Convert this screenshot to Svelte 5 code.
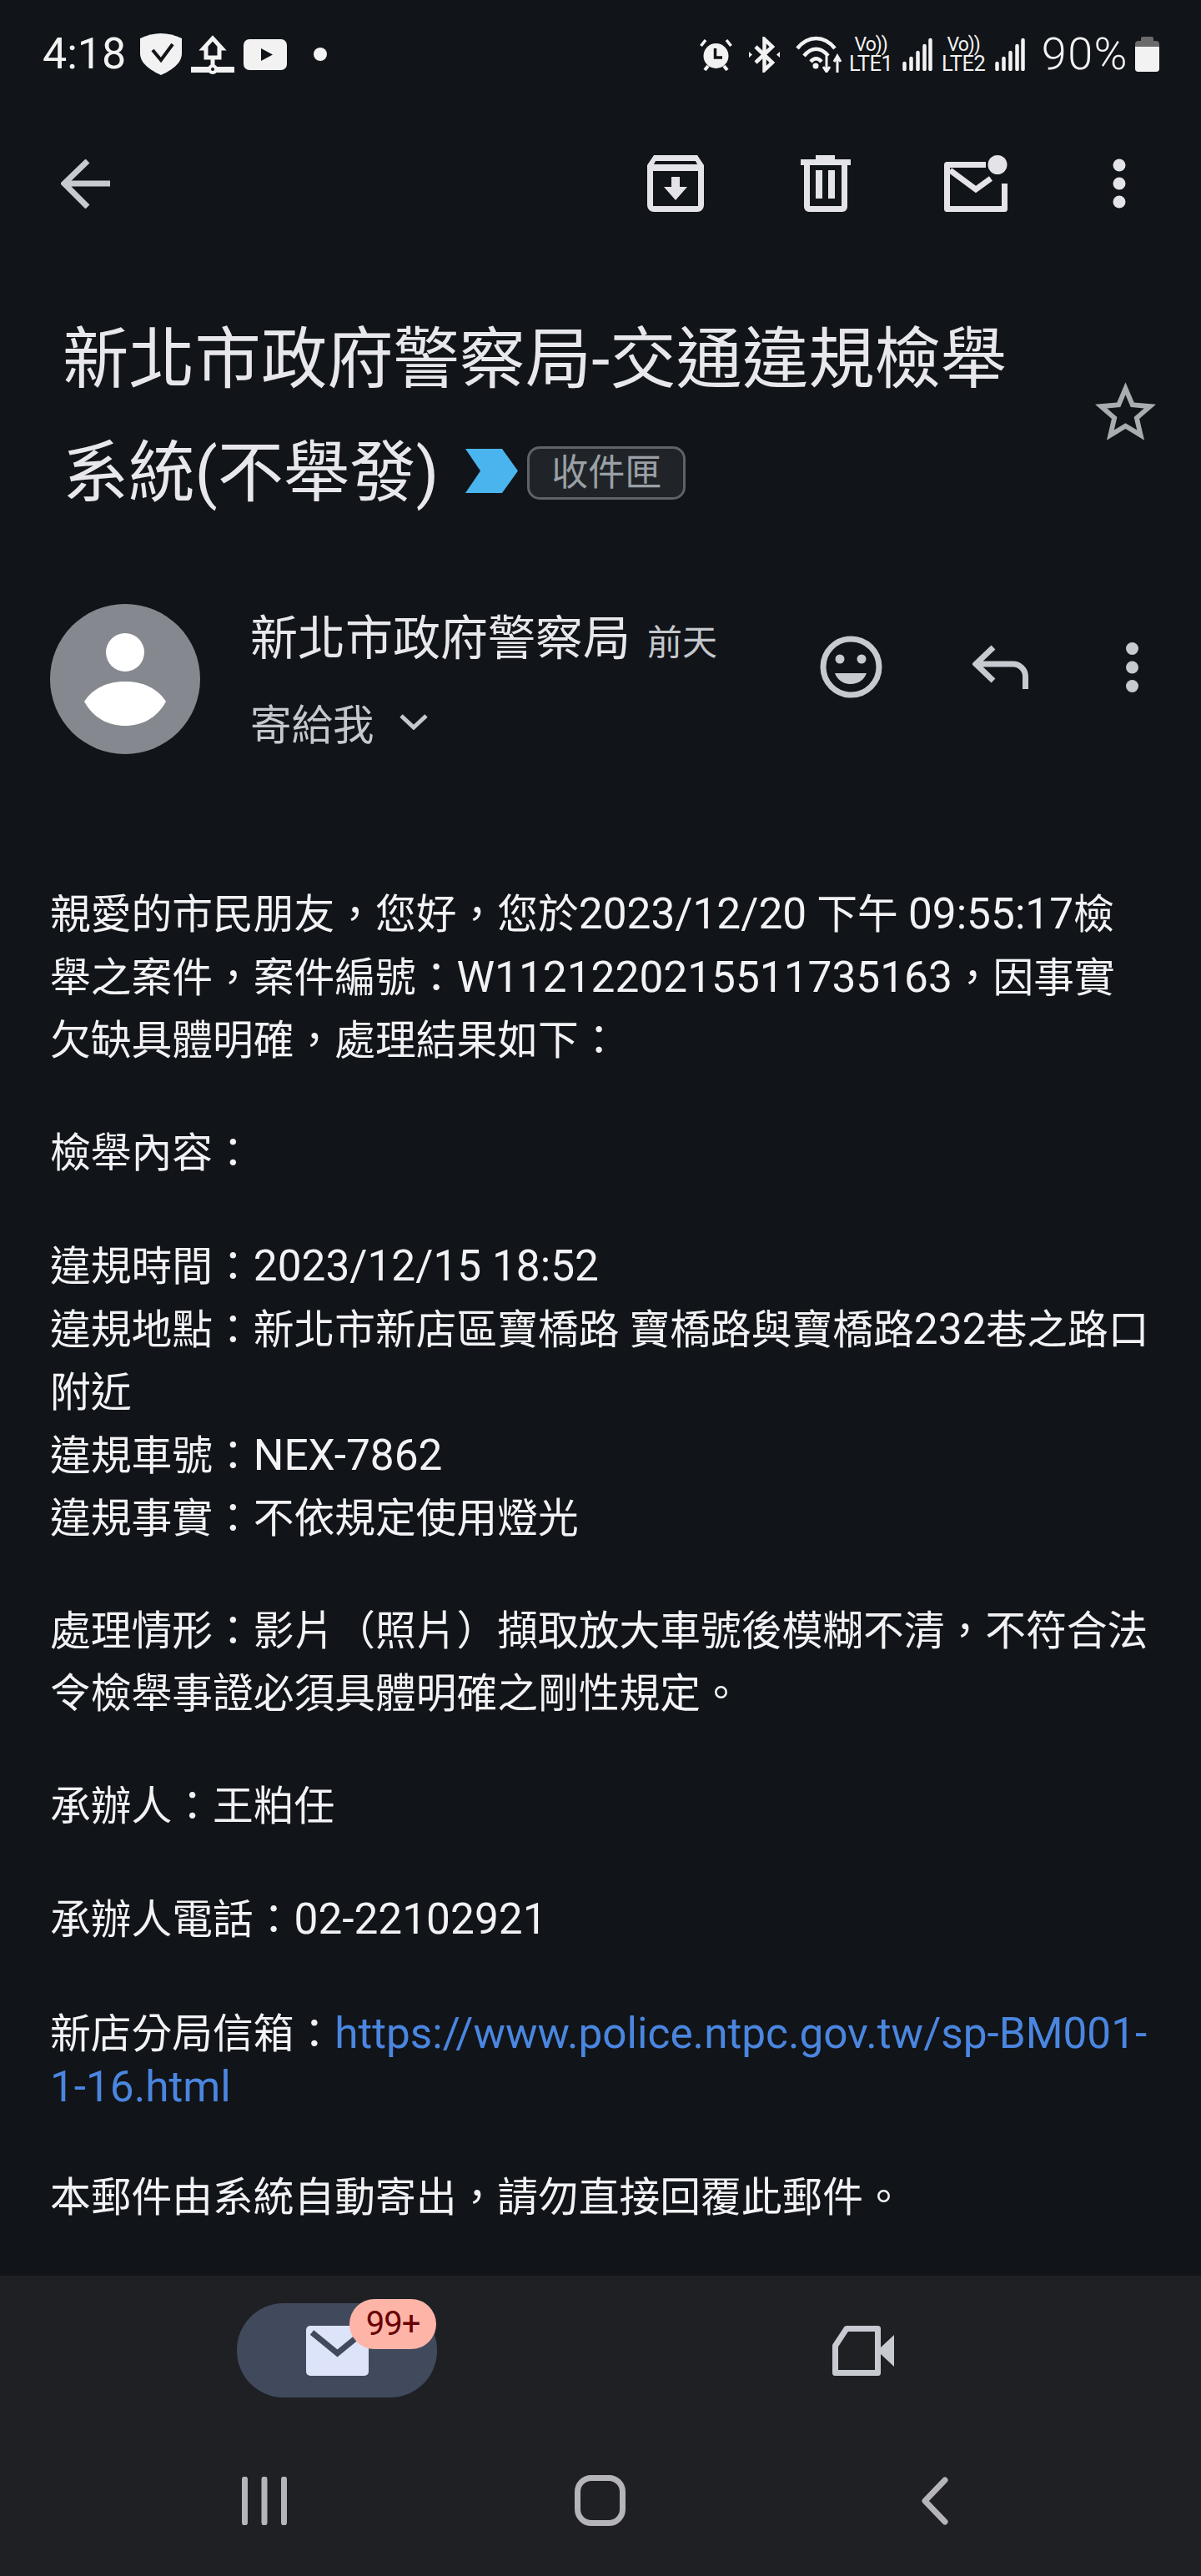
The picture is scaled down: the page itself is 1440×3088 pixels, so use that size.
<script lang="ts">
  const signalBars = [
    { x: 2.5, y: 29 },
    { x: 10.5, y: 23 },
    { x: 18.5, y: 16 },
    { x: 26.5, y: 8 },
    { x: 33.5, y: 1 },
  ];
</script>

{#snippet signal()}
  <svg class="signal" viewBox="0 0 36 40" aria-hidden="true">
    {#each signalBars as bar}
      <line x1={bar.x} y1={bar.y + 2} x2={bar.x} y2="38" stroke="#f2f2f2" stroke-width="4.5" stroke-linecap="round" />
    {/each}
  </svg>
{/snippet}

{#snippet volte(label: string)}
  <span class="volte"><span class="vo">Vo))</span><span class="lte">{label}</span></span>
{/snippet}

<div class="screen">
  <header class="status">
    <div class="status-left">
      <span class="clock">4:18</span>
      <svg class="st-shield" viewBox="0 0 50 50" aria-hidden="true">
        <path d="M25 0C33 0 42 2 50 6V24C50 36 38 44 25 50C12 44 0 36 0 24V6C8 2 17 0 25 0Z" fill="#f2f2f2" />
        <path d="M15 20L25 32L39 13" fill="none" stroke="#111418" stroke-width="4" />
      </svg>
      <svg class="st-net" viewBox="0 0 52 48" aria-hidden="true">
        <path d="M26 5L37 17H34V28H18V17H15Z" fill="none" stroke="#f2f2f2" stroke-width="5" />
        <rect x="23.5" y="28" width="5" height="10" fill="#f2f2f2" />
        <rect x="0" y="39" width="52" height="7" fill="#f2f2f2" />
        <circle cx="26" cy="42" r="6" fill="#f2f2f2" />
        <circle cx="26" cy="42" r="2" fill="#111418" />
      </svg>
      <svg class="st-yt" viewBox="0 0 52 37" aria-hidden="true">
        <rect width="52" height="37" rx="7" fill="#f2f2f2" />
        <path d="M21 11L35 18.5L21 26Z" fill="#111418" />
      </svg>
      <span class="st-dot"></span>
    </div>
    <div class="status-right">
      <svg class="st-alarm" viewBox="0 0 39 39" aria-hidden="true">
        <circle cx="19.5" cy="21" r="15" fill="#f2f2f2" />
        <path d="M18.5 12V23H27" fill="none" stroke="#111418" stroke-width="3.5" />
        <path d="M1.5 9L7 2M37.5 9L32 2" stroke="#f2f2f2" stroke-width="3.5" />
        <path d="M6 38L10 33M33 38L29 33" stroke="#f2f2f2" stroke-width="4" />
      </svg>
      <svg class="st-bt" viewBox="0 0 37 43" aria-hidden="true">
        <path d="M8 12L28 31L18.5 40V3L28 12L8 31" fill="none" stroke="#f2f2f2" stroke-width="4.5" />
        <path d="M0 18L4 21.5L0 25ZM37 18L33 21.5L37 25Z" fill="#f2f2f2" />
      </svg>
      <svg class="st-wifi" viewBox="0 0 58 44" aria-hidden="true">
        <g fill="none" stroke="#f2f2f2" stroke-width="4.5">
          <path d="M2 15C15 -1 34 -1 47 15" />
          <path d="M10 24C19 13 30 13 39 24" />
          <path d="M18 31C22 26 27 26 31 31" />
        </g>
        <circle cx="24" cy="36" r="3.5" fill="#f2f2f2" />
        <path d="M37 24V42M33 37L37 43L41 37M50 44V26M46 31L50 24L54 31" fill="none" stroke="#f2f2f2" stroke-width="3" />
      </svg>
      {@render volte("LTE1")}
      {@render signal()}
      {@render volte("LTE2")}
      {@render signal()}
      <span class="battery-pct">90%</span>
      <svg class="st-batt" viewBox="0 0 29 42" aria-hidden="true">
        <rect x="7" y="0" width="15" height="8" rx="2" fill="#6a6a6a" />
        <rect x="0" y="5" width="29" height="37" rx="4" fill="#6a6a6a" />
        <path d="M0 12H29V38A4 4 0 0 1 25 42H4A4 4 0 0 1 0 38Z" fill="#f2f2f2" />
      </svg>
    </div>
  </header>

  <nav class="toolbar">
    <svg class="tb-back" viewBox="0 0 59 59" aria-hidden="true">
      <path d="M4 29H59M32 2L4 29L32 57" fill="none" stroke="#c8cad2" stroke-width="7" />
    </svg>
    <div class="tb-actions">
      <svg class="tb-archive" viewBox="0 0 68 68" aria-hidden="true">
        <path fill="#e3e3e8" fill-rule="evenodd" d="M8 0H60L68 12V60A8 8 0 0 1 60 68H8A8 8 0 0 1 0 60V12ZM10 7L8 11H60L58 7ZM7 19V61H61V19ZM29 26H39V38H48L34 54L20 38H29Z" />
      </svg>
      <svg class="tb-trash" viewBox="0 0 60 68" aria-hidden="true">
        <path fill="#e3e3e8" fill-rule="evenodd" d="M18 0H41V5H60V12H56V62A6 6 0 0 1 50 68H10A6 6 0 0 1 4 62V12H0V5H18ZM11 12V61H49V12ZM18 18H26V52H18ZM33 18H41V52H33Z" />
      </svg>
      <svg class="tb-mail" viewBox="0 0 76 68" aria-hidden="true">
        <path d="M50 11.5H3.5V64.5H72.5V34" fill="none" stroke="#e3e3e8" stroke-width="7" stroke-linejoin="round" />
        <path d="M7 18L38 41L56 28" fill="none" stroke="#e3e3e8" stroke-width="7" />
        <circle cx="64" cy="11.5" r="11.5" fill="#e3e3e8" />
      </svg>
      <svg class="tb-more" viewBox="0 0 16 60" aria-hidden="true">
        <circle cx="8" cy="8" r="7.5" fill="#e3e3e8" />
        <circle cx="8" cy="30" r="7.5" fill="#e3e3e8" />
        <circle cx="8" cy="52" r="7.5" fill="#e3e3e8" />
      </svg>
    </div>
  </nav>

  <section class="subject">
    <h1>
      新北市政府警察局-交通違規檢舉<br />系統(不舉發)<svg class="label-arrow" viewBox="0 0 63 53" aria-hidden="true"><path d="M0 0H44L63 26.500L44 53H0L18 26.500Z" fill="#4ab4ee" /></svg><span class="chip">收件匣</span>
    </h1>
    <svg class="star" viewBox="2 2 20 19" aria-hidden="true">
      <path fill="#a8adb0" d="M22 9.240l-7.190-.620L12 2 9.190 8.630 2 9.240l5.460 4.730L5.820 21 12 17.270 18.180 21l-1.630-7.030L22 9.240zM12 15.400l-3.760 2.270 1-4.280-3.320-2.880 4.380-.380L12 6.100l1.710 4.040 4.380.380-3.320 2.880 1 4.280L12 15.400z" />
    </svg>
  </section>

  <section class="sender">
    <svg class="avatar" viewBox="0 0 180 180" aria-hidden="true">
      <circle cx="90" cy="90" r="90" fill="#85898f" />
      <circle cx="90" cy="58" r="23" fill="#fff" />
      <path d="M41 117C52 100 70 93 90 93S128 100 139 117C128 137 110 146 90 146S52 137 41 117Z" fill="#fff" />
    </svg>
    <div class="sender-info">
      <div class="sender-line">
        <span class="sender-name">新北市政府警察局</span>
        <span class="sender-when">前天</span>
      </div>
      <div class="sender-to">
        <span>寄給我</span>
        <svg class="to-chevron" viewBox="0 0 34 20" aria-hidden="true">
          <path d="M2 3L17 17L32 3" fill="none" stroke="#c5c8ce" stroke-width="5" />
        </svg>
      </div>
    </div>
    <div class="sender-actions">
      <svg class="act-smile" viewBox="0 0 75 75" aria-hidden="true">
        <circle cx="37.500" cy="37.500" r="33.500" fill="none" stroke="#c8cad2" stroke-width="7" />
        <circle cx="24" cy="28" r="5.500" fill="#c8cad2" />
        <circle cx="50" cy="28" r="5.500" fill="#c8cad2" />
        <path d="M18 45H56C53 53 46 58 37 58S21 53 18 45Z" fill="#c8cad2" />
      </svg>
      <svg class="act-reply" viewBox="0 0 69 53" aria-hidden="true">
        <path d="M25 3L4 23L25 43M4 23H48A15 15 0 0 1 63.500 38V53" fill="none" stroke="#c8cad2" stroke-width="7" />
      </svg>
      <svg class="act-more" viewBox="0 0 15 60" aria-hidden="true">
        <circle cx="7.500" cy="7.500" r="7.500" fill="#c8cad2" />
        <circle cx="7.500" cy="30" r="7.500" fill="#c8cad2" />
        <circle cx="7.500" cy="52.500" r="7.500" fill="#c8cad2" />
      </svg>
    </div>
  </section>

  <main class="body">
    <p>親愛的市民朋友，您好，您於<span class="en">2023/12/20</span> 下午 <span class="en">09:55:17</span>檢<br />舉之案件，案件編號：<span class="en">W1121220215511735163</span>，因事實<br />欠缺具體明確，處理結果如下：</p>
    <p>檢舉內容：</p>
    <p>違規時間：<span class="en">2023/12/15 18:52</span><br />違規地點：新北市新店區寶橋路 寶橋路與寶橋路<span class="en">232</span>巷之路口<br />附近<br />違規車號：<span class="en">NEX-7862</span><br />違規事實：不依規定使用燈光</p>
    <p>處理情形：影片（照片）擷取放大車號後模糊不清，不符合法<br />令檢舉事證必須具體明確之剛性規定。</p>
    <p>承辦人：王粕任</p>
    <p>承辦人電話：<span class="en">02-22102921</span></p>
    <p class="with-link">新店分局信箱：<a href="#top">https://www.police.ntpc.gov.tw/sp-BM001-</a><br /><a href="#top">1-16.html</a></p>
    <p>本郵件由系統自動寄出，請勿直接回覆此郵件。</p>
  </main>

  <footer class="bottom">
    <div class="tabs">
      <div class="tab-mail">
        <svg class="mail-icon" viewBox="0 0 75 60" aria-hidden="true">
          <rect width="75" height="60" rx="5" fill="#dde3f8" />
          <path d="M7 8L37.500 33L68 8" fill="none" stroke="#414a5c" stroke-width="7" />
        </svg>
        <span class="badge">99+</span>
      </div>
      <svg class="tab-video" viewBox="0 0 74 60" aria-hidden="true">
        <path d="M17 3.500H54.500V56.500H3.500V24Z" fill="none" stroke="#c8cad2" stroke-width="7" stroke-linejoin="round" />
        <path d="M58 26L74 11V49L58 34Z" fill="#c8cad2" />
      </svg>
    </div>
    <div class="sysnav">
      <svg class="nav-recent" viewBox="0 0 54 58" aria-hidden="true">
        <path d="M3.500 3V55M27 3V55M50.500 3V55" stroke="#b5b5b9" stroke-width="7" stroke-linecap="round" />
      </svg>
      <span class="nav-home"></span>
      <svg class="nav-back" viewBox="0 0 32 58" aria-hidden="true">
        <path d="M28 4L4 29L28 54" fill="none" stroke="#b5b5b9" stroke-width="7" stroke-linecap="round" stroke-linejoin="round" />
      </svg>
    </div>
  </footer>
</div>

<style>
  :global(body) {
    margin: 0;
    background: #111418;
  }

  .screen {
    display: flex;
    flex-direction: column;
    width: 1440px;
    height: 3088px;
    overflow: hidden;
    background: #111418;
    color: #e8e8ec;
    font-family: Roboto, "Noto Sans CJK TC", sans-serif;
  }

  .screen > * {
    flex: none;
  }

  svg {
    display: block;
    flex: none;
  }

  /* status bar */
  .status {
    display: flex;
    align-items: center;
    justify-content: space-between;
    height: 130px;
    padding: 0 50px 0 51px;
    box-sizing: border-box;
    color: #f2f2f2;
  }

  .status-left,
  .status-right {
    display: flex;
    align-items: center;
  }

  .clock {
    width: 117px;
    font-size: 52px;
    font-weight: 400;
    line-height: 52px;
  }

  .st-shield {
    width: 50px;
    height: 50px;
  }

  .st-net {
    width: 52px;
    height: 48px;
    margin-left: 11px;
  }

  .st-yt {
    width: 52px;
    height: 37px;
    margin-left: 11px;
  }

  .st-dot {
    width: 16px;
    height: 16px;
    margin-left: 32px;
    border-radius: 50%;
    background: #f2f2f2;
  }

  .st-alarm {
    width: 39px;
    height: 39px;
  }

  .st-bt {
    width: 37px;
    height: 43px;
    margin-left: 20px;
  }

  .st-wifi {
    width: 58px;
    height: 44px;
    margin-left: 19px;
  }

  .volte {
    display: flex;
    flex-direction: column;
    align-items: center;
    width: 53px;
    margin: 0 11px 0 6px;
    line-height: 1;
  }

  .vo {
    height: 23px;
    font-size: 23px;
    line-height: 23px;
    letter-spacing: -1px;
  }

  .lte {
    height: 23px;
    font-size: 25.500px;
    line-height: 23px;
    letter-spacing: -0.500px;
  }

  .signal {
    width: 36px;
    height: 40px;
    margin-right: 5px;
  }

  .battery-pct {
    margin-left: 15px;
    font-size: 54px;
    font-weight: 300;
    line-height: 54px;
    letter-spacing: 1.500px;
  }

  .st-batt {
    width: 29px;
    height: 42px;
    margin-left: 8px;
  }

  /* app toolbar */
  .toolbar {
    display: flex;
    align-items: center;
    justify-content: space-between;
    height: 180px;
    padding: 0 90px 0 73px;
    box-sizing: border-box;
  }

  .tb-back {
    width: 59px;
    height: 59px;
  }

  .tb-actions {
    display: flex;
    align-items: center;
  }

  .tb-archive {
    width: 68px;
    height: 68px;
  }

  .tb-trash {
    width: 60px;
    height: 68px;
    margin-left: 116px;
  }

  .tb-mail {
    width: 76px;
    height: 68px;
    margin-left: 112px;
  }

  .tb-more {
    width: 16px;
    height: 60px;
    margin-left: 126px;
  }

  /* subject */
  .subject {
    display: flex;
    align-items: center;
    justify-content: space-between;
    padding: 53px 54px 0 75px;
  }

  h1 {
    margin: 0;
    font-size: 79.300px;
    font-weight: 400;
    line-height: 136px;
    white-space: nowrap;
  }

  .label-arrow {
    display: inline-block;
    width: 63px;
    height: 53px;
    margin-left: 32px;
    vertical-align: 3px;
  }

  .chip {
    display: inline-flex;
    align-items: center;
    justify-content: center;
    box-sizing: border-box;
    width: 190px;
    height: 64px;
    margin-left: 11px;
    border: 3px solid #5f6368;
    border-radius: 15px;
    background: #202428;
    color: #9aa0a6;
    font-size: 44px;
    line-height: 1;
    vertical-align: 12px;
  }

  .star {
    width: 73px;
    height: 70px;
    margin-top: -12px;
  }

  /* sender row */
  .sender {
    display: flex;
    align-items: flex-start;
    margin-top: 89px;
    padding: 0 75px 0 60px;
  }

  .avatar {
    width: 180px;
    height: 180px;
  }

  .sender-info {
    flex: 1;
    margin-left: 60px;
  }

  .sender-line {
    display: flex;
    align-items: baseline;
    height: 84px;
    line-height: 84px;
  }

  .sender-name {
    font-size: 57px;
  }

  .sender-when {
    margin-left: 20px;
    color: #c4c7cc;
    font-size: 42px;
  }

  .sender-to {
    display: flex;
    align-items: center;
    height: 60px;
    margin-top: 27px;
    color: #c5c8ce;
    font-size: 49.500px;
  }

  .to-chevron {
    width: 34px;
    height: 20px;
    margin-left: 30px;
  }

  .sender-actions {
    display: flex;
    align-items: center;
    margin-top: 38px;
  }

  .act-smile {
    width: 75px;
    height: 75px;
  }

  .act-reply {
    width: 69px;
    height: 53px;
    margin-left: 108px;
  }

  .act-more {
    width: 15px;
    height: 60px;
    margin-left: 115px;
  }

  /* message body */
  .screen > .body {
    flex: 1;
    min-height: 0;
    margin-top: 154px;
    padding: 0 60px;
    font-size: 48.750px;
    line-height: 75px;
    color: #f2f2f4;
  }

  .body p {
    margin: 0 0 60px;
  }

  .body p.with-link {
    margin: 67px 0 63px;
    line-height: 63px;
  }

  .body p:last-child {
    margin-bottom: 0;
  }

  .body .en {
    font-size: 51.400px;
  }

  .body a {
    color: #4a86e0;
    font-size: 51.300px;
    text-decoration: none;
  }

  /* bottom tabs + system nav */
  .bottom {
    background: #1f2024;
  }

  .tabs {
    position: relative;
    display: flex;
    align-items: center;
    height: 179px;
    padding: 33px 0 0 284px;
    box-sizing: border-box;
  }

  .tab-mail {
    position: relative;
    display: flex;
    align-items: center;
    justify-content: center;
    width: 240px;
    height: 113px;
    margin-top: -33px;
    border-radius: 56px;
    background: #414a5c;
  }

  .badge {
    position: absolute;
    top: -5px;
    right: 1px;
    width: 104px;
    height: 60px;
    border-radius: 30px;
    background: #ffb4a8;
    color: #690005;
    font-size: 40px;
    line-height: 60px;
    letter-spacing: -1px;
    text-align: center;
  }

  .mail-icon {
    width: 75px;
    height: 60px;
  }

  .tab-video {
    width: 74px;
    height: 60px;
    margin-left: 474px;
    margin-top: -33px;
  }

  .sysnav {
    display: flex;
    align-items: center;
    height: 181px;
    padding: 0 0 0 290px;
    box-sizing: border-box;
  }

  .nav-recent {
    width: 54px;
    height: 58px;
  }

  .nav-home {
    display: block;
    box-sizing: border-box;
    width: 61px;
    height: 61px;
    margin-left: 345px;
    border: 7px solid #b5b5b9;
    border-radius: 20px;
  }

  .nav-back {
    width: 32px;
    height: 58px;
    margin-left: 355px;
  }
</style>
